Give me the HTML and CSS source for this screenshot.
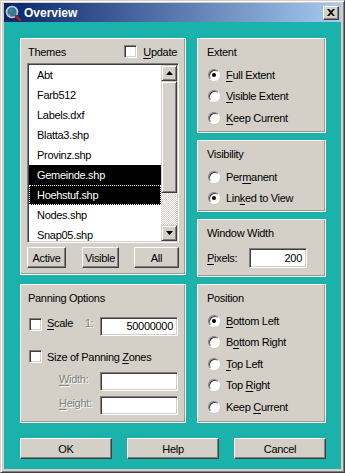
FILE: index.html
```html
<!DOCTYPE html>
<html lang="en">
<head>
    <meta charset="UTF-8">
    <meta name="viewport" content="width=device-width, initial-scale=1.0">
    <title>Overview</title>
    <link rel="stylesheet" href="styles.css">
</head>
<body>
    <div class="window">
        <div class="titlebar">
            <svg class="app-icon" width="16" height="16" viewBox="0 0 16 16">
                <circle cx="7" cy="7" r="5.5" fill="#2a6fc0" stroke="#d0d0d0" stroke-width="1.5"/>
                <path d="M4 4.5 L7 3.5 L8 6 L6 8 L4.5 7 Z" fill="#2fa53a"/>
                <path d="M8.5 8 L10.5 7.5 L10 10 L8 10.5 Z" fill="#2fa53a"/>
                <path d="M3.5 9.5 L5 9 L5.5 11 Z" fill="#e0c040"/>
                <line x1="10.8" y1="10.8" x2="15" y2="15" stroke="#9a2a1a" stroke-width="2.6" stroke-linecap="round"/>
            </svg>
            <span class="title">Overview</span>
            <div class="close-btn">
                <svg width="8" height="7" viewBox="0 0 8 7">
                    <path d="M0 0 L2 0 L4 2 L6 0 L8 0 L5 3.5 L8 7 L6 7 L4 5 L2 7 L0 7 L3 3.5 Z" fill="#000"/>
                </svg>
            </div>
        </div>

        <div class="client">
            <div class="columns">
                <div class="col-left">
                    <div class="panel themes">
                        <div class="themes-head">
                            <span>Themes</span>
                            <span class="check-label"><span class="checkbox"></span><span><u>U</u>pdate</span></span>
                        </div>
                        <div class="listbox">
                            <ul class="items">
                                <li>Abt</li>
                                <li>Farb512</li>
                                <li>Labels.dxf</li>
                                <li>Blatta3.shp</li>
                                <li>Provinz.shp</li>
                                <li class="selected">Gemeinde.shp</li>
                                <li class="selected focused">Hoehstuf.shp</li>
                                <li>Nodes.shp</li>
                                <li>Snap05.shp</li>
                            </ul>
                            <div class="scrollbar">
                                <div class="scroll-btn">
                                    <svg width="7" height="4" viewBox="0 0 7 4"><polygon points="3.5,0 7,4 0,4" fill="#000"/></svg>
                                </div>
                                <div class="track">
                                    <div class="thumb"></div>
                                </div>
                                <div class="scroll-btn">
                                    <svg width="7" height="4" viewBox="0 0 7 4"><polygon points="0,0 7,0 3.5,4" fill="#000"/></svg>
                                </div>
                            </div>
                        </div>
                        <div class="list-buttons">
                            <div class="btn btn-active">Active</div>
                            <div class="btn btn-visible">Visible</div>
                            <div class="btn btn-all">All</div>
                        </div>
                    </div>

                    <div class="panel panning">
                        <div class="panel-title">Panning Options</div>
                        <div class="scale-row">
                            <span class="checkbox"></span>
                            <span class="scale-text"><u>S</u>cale</span>
                            <span class="disabled ratio">1:</span>
                            <div class="field field-wide">50000000</div>
                        </div>
                        <div class="zones-row">
                            <span class="checkbox"></span>
                            <span>Size of Panning <u>Z</u>ones</span>
                        </div>
                        <div class="zone-field first">
                            <span class="disabled zone-label"><u>W</u>idth:</span>
                            <div class="field field-wide"></div>
                        </div>
                        <div class="zone-field">
                            <span class="disabled zone-label"><u>H</u>eight:</span>
                            <div class="field field-wide"></div>
                        </div>
                    </div>
                </div>

                <div class="col-right">
                    <div class="panel extent">
                        <div class="panel-title">Extent</div>
                        <div class="radios">
                            <div class="radio-row"><span class="radio on"></span><span><u>F</u>ull Extent</span></div>
                            <div class="radio-row"><span class="radio"></span><span><u>V</u>isible Extent</span></div>
                            <div class="radio-row"><span class="radio"></span><span><u>K</u>eep Current</span></div>
                        </div>
                    </div>

                    <div class="panel visibility">
                        <div class="panel-title">Visibility</div>
                        <div class="radios">
                            <div class="radio-row"><span class="radio"></span><span>Per<u>m</u>anent</span></div>
                            <div class="radio-row"><span class="radio on"></span><span>Lin<u>k</u>ed to View</span></div>
                        </div>
                    </div>

                    <div class="panel winwidth">
                        <div class="panel-title">Window Width</div>
                        <div class="pixels-row">
                            <span class="pixels-label"><u>P</u>ixels:</span>
                            <div class="field field-pixels">200</div>
                        </div>
                    </div>

                    <div class="panel position">
                        <div class="panel-title">Position</div>
                        <div class="radios">
                            <div class="radio-row"><span class="radio on"></span><span><u>B</u>ottom Left</span></div>
                            <div class="radio-row"><span class="radio"></span><span>B<u>o</u>ttom Right</span></div>
                            <div class="radio-row"><span class="radio"></span><span><u>T</u>op Left</span></div>
                            <div class="radio-row"><span class="radio"></span><span>Top <u>R</u>ight</span></div>
                            <div class="radio-row"><span class="radio"></span><span>Keep <u>C</u>urrent</span></div>
                        </div>
                    </div>
                </div>
            </div>

            <div class="dialog-buttons">
                <div class="btn btn-dialog">OK</div>
                <div class="btn btn-dialog">Help</div>
                <div class="btn btn-dialog">Cancel</div>
            </div>
        </div>
    </div>
</body>
</html>
```

FILE: styles.css
```css
* {
    margin: 0;
    padding: 0;
    box-sizing: border-box;
    font-family: "Liberation Sans", Arial, sans-serif;
}

body {
    width: 345px;
    height: 473px;
    overflow: hidden;
    background-color: #d4d0c8;
    color: #000;
    font-size: 11px;
    letter-spacing: -0.3px;
}

u {
    text-decoration: underline;
    text-underline-offset: 2px;
}

/* window frame */

.window {
    width: 345px;
    height: 473px;
    display: flex;
    flex-direction: column;
    background-color: #d4d0c8;
    border: 1px solid;
    border-color: #d4d0c8 #404040 #404040 #d4d0c8;
    box-shadow: inset 1px 1px #fff, inset -1px -1px #808080;
    padding: 2px 3px 3px 3px;
}

.titlebar {
    height: 19px;
    flex-shrink: 0;
    display: flex;
    align-items: center;
    padding: 0 2px 0 1px;
    background: linear-gradient(to right, #0a246a, #a6caf0);
}

.app-icon {
    flex-shrink: 0;
}

.title {
    margin-left: 3px;
    color: #fff;
    font-size: 12px;
    font-weight: bold;
    letter-spacing: 0;
}

.close-btn {
    margin-left: auto;
    width: 16px;
    height: 14px;
    display: flex;
    align-items: center;
    justify-content: center;
    background-color: #d4d0c8;
    border: 1px solid;
    border-color: #fff #404040 #404040 #fff;
    box-shadow: inset -1px -1px #808080;
}

.client {
    flex: 1;
    background-color: #1ab2aa;
    padding: 16px 15px 0 16px;
}

.columns {
    display: flex;
    gap: 11px;
}

.col-left {
    width: 166px;
    display: flex;
    flex-direction: column;
    gap: 9px;
}

.col-right {
    width: 129px;
    display: flex;
    flex-direction: column;
    gap: 7px;
}

/* panels */

.panel {
    background-color: #d4d0c8;
    border: 1px solid #fff;
    box-shadow: inset -1px -1px #9c9a94;
}

.panel-title {
    height: 13px;
    line-height: 13px;
}

.themes {
    height: 237px;
    padding: 6px 6px 0 6px;
}

.panning {
    height: 139px;
    padding: 7px 7px 0 6px;
}

.extent {
    height: 95px;
    padding: 7px 8px 0 9px;
}

.visibility {
    height: 72px;
    padding: 7px 8px 0 9px;
}

.winwidth {
    height: 58px;
    padding: 7px 8px 0 9px;
}

.position {
    height: 139px;
    padding: 7px 8px 0 9px;
}

/* controls */

.checkbox {
    width: 13px;
    height: 13px;
    flex-shrink: 0;
    background-color: #fff;
    border: 1px solid;
    border-color: #808080 #fff #fff #808080;
    box-shadow: inset 1px 1px #404040, inset -1px -1px #d4d0c8;
}

.radios {
    margin-top: 5px;
}

.radio-row {
    height: 21.5px;
    display: flex;
    align-items: center;
}

.radio {
    position: relative;
    width: 12px;
    height: 12px;
    margin: 0 6px 0 1px;
    flex-shrink: 0;
    border-radius: 50%;
    background-color: #fff;
    border: 1px solid;
    border-color: #808080 #fff #fff #808080;
    box-shadow: inset 1px 1px #404040;
}

.radio.on::after {
    content: "";
    position: absolute;
    left: 3px;
    top: 3px;
    width: 4px;
    height: 4px;
    border-radius: 50%;
    background-color: #000;
}

.field {
    height: 19px;
    line-height: 17px;
    background-color: #fff;
    border: 1px solid;
    border-color: #808080 #fff #fff #808080;
    box-shadow: inset 1px 1px #404040, inset -1px -1px #d4d0c8;
    text-align: right;
    padding-right: 4px;
}

.btn {
    height: 21px;
    display: flex;
    align-items: center;
    justify-content: center;
    background-color: #d4d0c8;
    border: 1px solid;
    border-color: #fff #404040 #404040 #fff;
    box-shadow: inset -1px -1px #808080;
}

.disabled {
    color: #808080;
    text-shadow: 1px 1px 0 #fff;
}

/* themes list */

.themes-head {
    height: 13px;
    display: flex;
    align-items: center;
    justify-content: space-between;
    padding: 0 2px 0 1px;
}

.check-label {
    display: flex;
    align-items: center;
    gap: 6px;
}

.listbox {
    margin-top: 5px;
    height: 180px;
    display: flex;
    border: 1px solid;
    border-color: #808080 #fff #fff #808080;
    box-shadow: inset 1px 1px #404040, inset -1px -1px #d4d0c8;
    padding: 1px;
    background-color: #fff;
}

.items {
    list-style: none;
    flex: 1;
    overflow: hidden;
}

.items li {
    height: 20px;
    line-height: 20px;
    padding-left: 8px;
}

.items li.selected {
    background-color: #000;
    color: #fff;
}

.items li.focused {
    outline: 1px dotted #fff;
    outline-offset: -1px;
}

.scrollbar {
    width: 16px;
    display: flex;
    flex-direction: column;
}

.scroll-btn {
    height: 16px;
    display: flex;
    align-items: center;
    justify-content: center;
    background-color: #d4d0c8;
    border: 1px solid;
    border-color: #d4d0c8 #404040 #404040 #d4d0c8;
    box-shadow: inset 1px 1px #fff, inset -1px -1px #808080;
}

.track {
    flex: 1;
    background: repeating-conic-gradient(#d4d0c8 0 25%, #fff 0 50%) 0 0 / 2px 2px;
}

.thumb {
    height: 112px;
    background-color: #d4d0c8;
    border: 1px solid;
    border-color: #d4d0c8 #404040 #404040 #d4d0c8;
    box-shadow: inset 1px 1px #fff, inset -1px -1px #808080;
}

.list-buttons {
    margin-top: 4px;
    display: flex;
    justify-content: space-between;
}

.btn-active {
    width: 39px;
}

.btn-visible {
    width: 37px;
}

.btn-all {
    width: 45px;
}

/* panning options */

.panning .panel-title {
    padding-left: 1px;
}

.scale-row {
    margin-top: 12px;
    height: 19px;
    display: flex;
    align-items: flex-start;
    padding-left: 2px;
}

.scale-row .checkbox {
    margin-top: 1px;
}

.scale-text {
    margin-left: 5px;
    line-height: 13px;
}

.ratio {
    margin-left: 12px;
    line-height: 13px;
}

.field-wide {
    width: 78px;
    margin-left: auto;
}

.zones-row {
    margin-top: 14px;
    height: 13px;
    display: flex;
    align-items: center;
    gap: 5px;
    padding-left: 2px;
}

.zone-field {
    margin-top: 5px;
    height: 19px;
    display: flex;
    align-items: flex-start;
    padding-left: 32px;
}

.zone-field.first {
    margin-top: 9px;
}

.zone-label {
    line-height: 13px;
    margin-top: 1px;
}

/* window width */

.pixels-row {
    margin-top: 8px;
    height: 20px;
    display: flex;
    align-items: center;
}

.pixels-label {
    width: 42px;
}

.field-pixels {
    width: 58px;
    height: 20px;
    line-height: 18px;
}

/* dialog buttons */

.dialog-buttons {
    margin-top: 15px;
    display: flex;
    justify-content: space-between;
}

.btn-dialog {
    width: 92px;
}
```
